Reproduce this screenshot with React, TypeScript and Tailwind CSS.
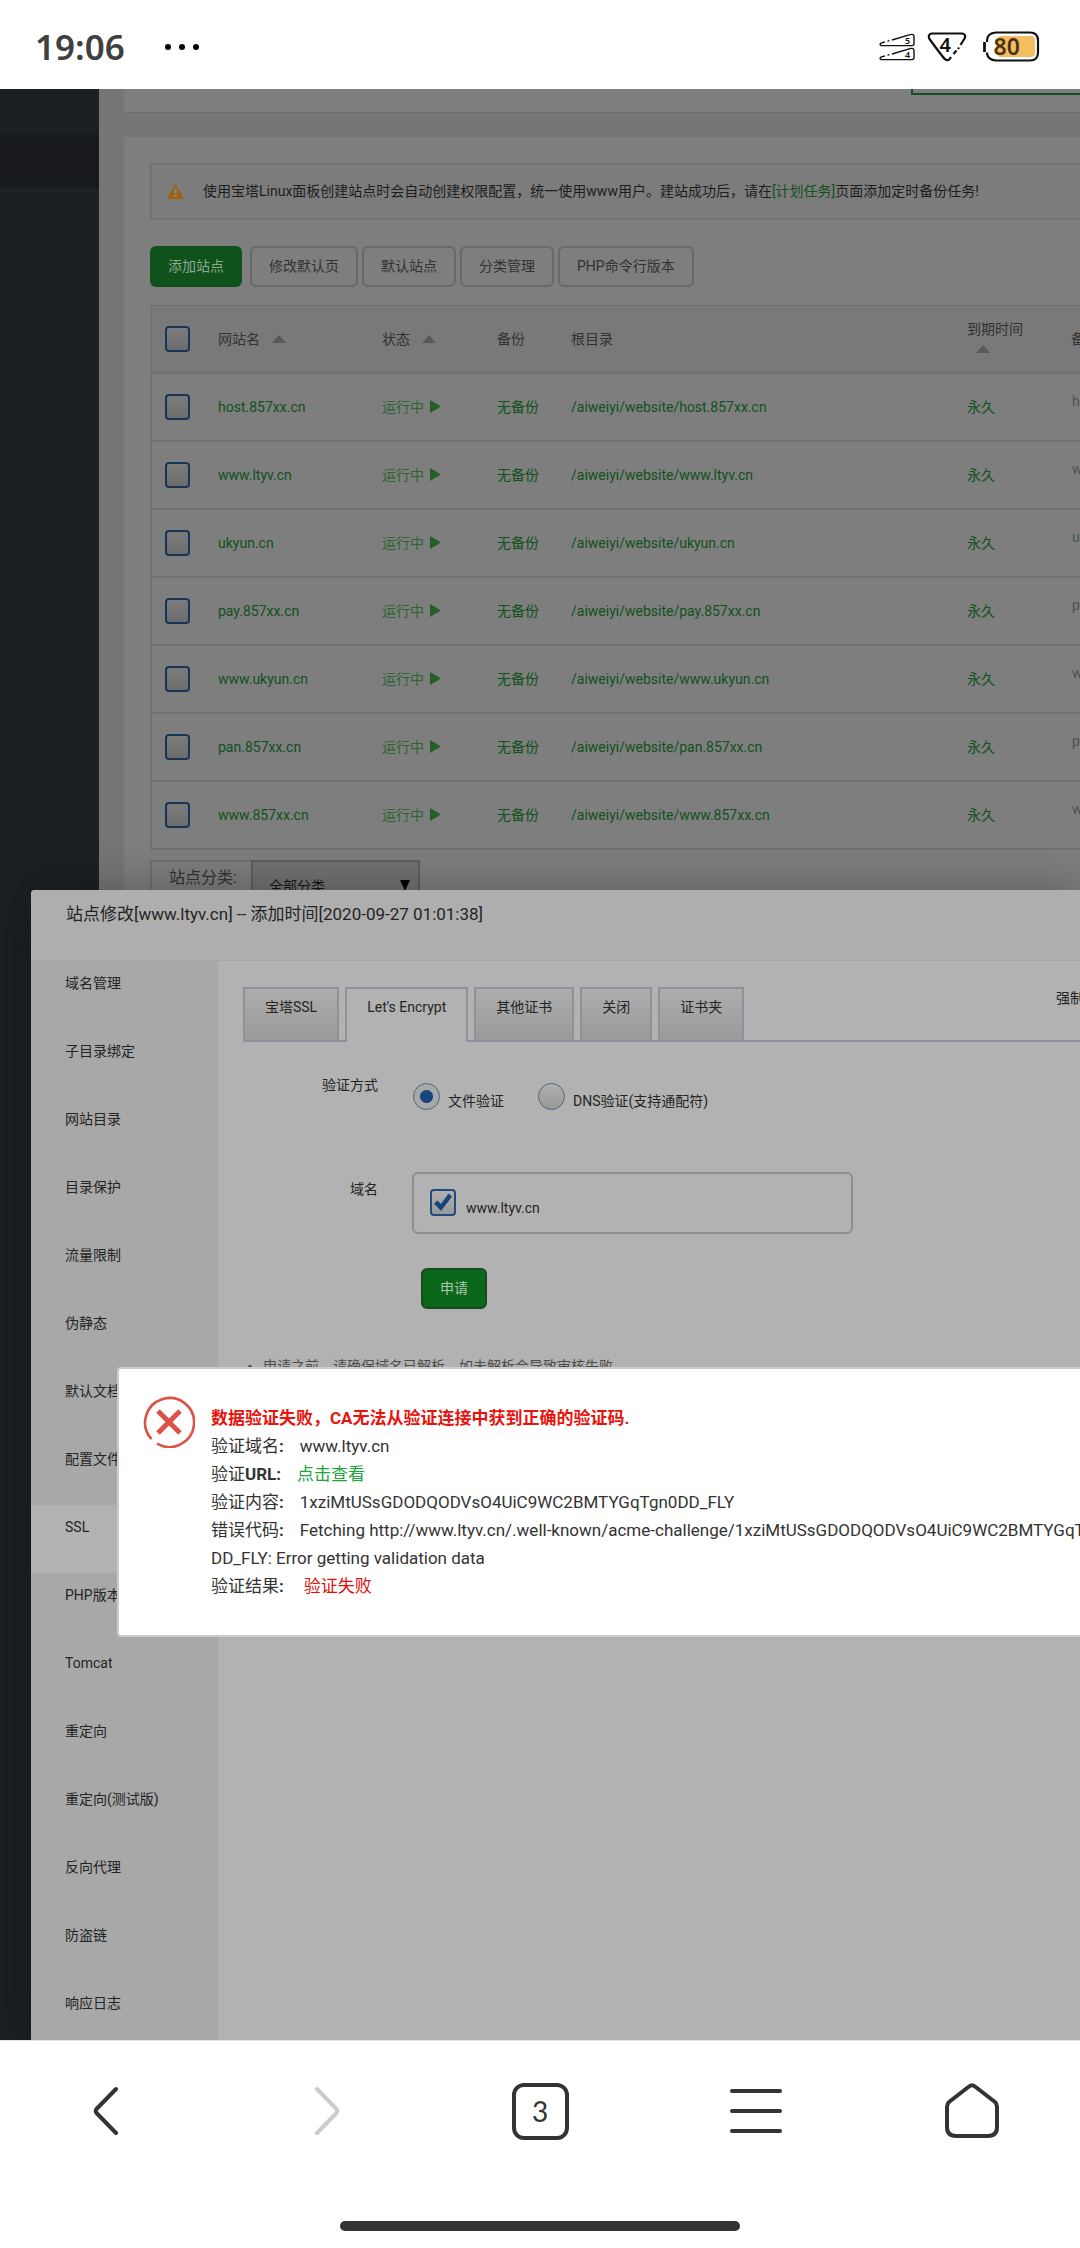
import React from "react";

type Site = { name: string; note: string };

const sites: Site[] = [
  { name: "host.857xx.cn", note: "host.857xx.cn" },
  { name: "www.ltyv.cn", note: "www.ltyv.cn" },
  { name: "ukyun.cn", note: "ukyun.cn" },
  { name: "pay.857xx.cn", note: "pay.857xx.cn" },
  { name: "www.ukyun.cn", note: "www.ukyun.cn" },
  { name: "pan.857xx.cn", note: "pan.857xx.cn" },
  { name: "www.857xx.cn", note: "www.857xx.cn" },
];

const menu = [
  "域名管理", "子目录绑定", "网站目录", "目录保护", "流量限制", "伪静态", "默认文档", "配置文件",
  "SSL", "PHP版本", "Tomcat", "重定向", "重定向(测试版)", "反向代理", "防盗链", "响应日志",
];

const sslTabs = ["宝塔SSL", "Let's Encrypt", "其他证书", "关闭", "证书夹"];

function StatusBar() {
  return (
    <header className="flex h-[89px] shrink-0 items-center bg-white pt-1 pr-10 pl-[35px]">
      <time className="font-['Noto_Sans',sans-serif] text-[35px] leading-none font-semibold text-[#404040]">19:06</time>
      <div className="ml-10 flex gap-2" aria-hidden="true">
        <i className="size-1.5 rounded-full bg-black" />
        <i className="size-1.5 rounded-full bg-black" />
        <i className="size-1.5 rounded-full bg-black" />
      </div>
      <div className="ml-auto flex items-center">
        <svg width="36" height="28" viewBox="0 0 36 28" fill="none" stroke="#111" strokeWidth="1.4">
          <path d="M1 11.5 2 10l4-1.200M8.500 8.200l2-.6M13 7 31 1.600q4-1 4 2v7q0 2-2 2H3q-2 0-2-1.500" />
          <path d="M1 25.500 2 24l4-1.200M8.500 22.200l2-.6M13 21l18-5.400q4-1 4 2v7q0 2-2 2H3q-2 0-2-1.500" />
          <text x="26" y="10.500" fontSize="9" fontFamily="Noto Sans" fontWeight="600" fill="#111" stroke="none">5</text>
          <text x="26" y="24.800" fontSize="9" fontFamily="Noto Sans" fontWeight="600" fill="#111" stroke="none">4</text>
        </svg>
        <svg className="ml-3" width="40" height="30" viewBox="0 0 40 30" fill="none" stroke="#111" strokeWidth="2.2">
          <path d="M24 25l-1.500 2.200q-2 2-4.500 0Q14.500 23.500 2.500 7q-2-4.500 2-5.500h31q4 1 2 5L33.500 13M32 15.500l-1 1.500M29.500 18.500 26.500 22" />
          <text x="12.500" y="20" fontSize="20" fontFamily="Noto Sans" fontWeight="600" fill="#111" stroke="none">4</text>
        </svg>
        <svg className="ml-4" width="57" height="31" viewBox="0 0 57 31" fill="none">
          <rect x="14" y="5" width="38" height="21" rx="4" fill="#f5bd62" />
          <path d="M4 11V10q0-8 9-8.500h34q8 0 8 8v12q0 8-8 8H13q-8-.5-9-7v-1" stroke="#111" strokeWidth="2.200" />
          <path d="M1.500 11v10" stroke="#111" strokeWidth="2.800" />
          <text x="10.500" y="24" fontSize="23" fontFamily="Noto Sans" fontWeight="600" fill="#4a3410">80</text>
        </svg>
      </div>
    </header>
  );
}

function RowCheck({ label }: { label: string }) {
  return (
    <input
      type="checkbox"
      aria-label={label}
      className="block h-[26px] w-[25px] appearance-none rounded-[4px] border-2 border-[#173558] bg-linear-to-b from-[#7c7c7c] to-[#6c6c6c]"
    />
  );
}

function SortArrow({ className }: { className?: string }) {
  return (
    <svg className={className} width="14" height="8" viewBox="0 0 14 8" aria-hidden="true">
      <path d="M7 0 14 8H0z" fill="#595959" />
    </svg>
  );
}

function SiteTable() {
  return (
    <table className="mt-[18px] w-[1250px] table-fixed border-collapse border border-[#6f6f6f] text-left">
      <colgroup>
        <col className="w-[67px]" />
        <col className="w-[164px]" />
        <col className="w-[115px]" />
        <col className="w-[74px]" />
        <col className="w-[396px]" />
        <col className="w-[104px]" />
        <col />
      </colgroup>
      <thead>
        <tr className="h-[67px] border-b-2 border-[#727272] bg-[#797979] text-[#323232]">
          <th className="pl-[13px]"><RowCheck label="全选" /></th>
          <th className="font-normal"><span className="flex items-center gap-3">网站名<SortArrow /></span></th>
          <th className="font-normal"><span className="flex items-center gap-3">状态<SortArrow /></span></th>
          <th className="font-normal">备份</th>
          <th className="font-normal">根目录</th>
          <th className="font-normal">到期时间<SortArrow className="my-1.5 ml-[9px]" /></th>
          <th className="font-normal">备注</th>
        </tr>
      </thead>
      <tbody>
        {sites.map((s) => (
          <tr key={s.name} className="h-[68px] border-2 border-[#717171] bg-[#7e7e7e] text-[#10511c]">
            <td className="pl-[13px]"><RowCheck label={s.name} /></td>
            <td><a href="#">{s.name}</a></td>
            <td>
              <a href="#" className="flex items-center gap-1.5 text-[#2e6432]">
                运行中
                <svg width="11" height="13" viewBox="0 0 11 13"><path d="M0 0 11 6.500 0 13z" fill="#255f25" /></svg>
              </a>
            </td>
            <td><a href="#">无备份</a></td>
            <td><a href="#">/aiweiyi/website/{s.name}</a></td>
            <td><a href="#">永久</a></td>
            <td className="pb-3 pl-px text-[#4f4f4f]">{s.note}</td>
          </tr>
        ))}
      </tbody>
    </table>
  );
}

function ToolButton({ children }: { children: React.ReactNode }) {
  return <button className="h-[41px] rounded-md border-2 border-[#696969] px-[17px] pb-0.5 text-[#323232]">{children}</button>;
}

function SitesPage() {
  return (
    <div className="flex h-full">
      <nav className="w-[99px] shrink-0 bg-[#1c2025] pt-[46px]" aria-label="主菜单">
        <div className="h-[52px] bg-[#18191c]" />
      </nav>
      <div className="min-w-0 flex-1 overflow-hidden bg-[#767676] pl-[25px]">
        <div className="flex h-6 w-[1300px] border-b border-[#6e6e6e] bg-[#7e7e7e] pl-[787px]">
          <div className="h-1.5 w-[300px] border-2 border-t-0 border-[#184e22]" />
        </div>
        <section className="mt-6 w-[1300px] bg-[#7e7e7e] pt-[26px] pb-20 pl-[26px]">
          <p className="flex h-[57px] items-center border-2 border-[#737373] bg-[#7c7c7c] pb-0.5 pl-[15px] text-[#1c1c1c]">
            <svg width="17" height="16" viewBox="0 0 17 16" aria-hidden="true">
              <path d="M8.500.5 17 16H0z" fill="#9a6414" />
              <path d="M8.500 5.500v5M8.500 12v2" stroke="#8a8a8a" strokeWidth="2.200" />
            </svg>
            <span className="ml-[19px] whitespace-nowrap">
              使用宝塔Linux面板创建站点时会自动创建权限配置，统一使用www用户。建站成功后，请在
              <a href="#" className="text-[#10511c]">[计划任务]</a>页面添加定时备份任务!
            </span>
          </p>
          <div className="mt-[26px] flex gap-1">
            <button className="mr-1 h-[41px] rounded-md bg-[#10521c] px-[18px] pb-0.5 text-[#8fa893]">添加站点</button>
            <ToolButton>修改默认页</ToolButton>
            <ToolButton>默认站点</ToolButton>
            <ToolButton>分类管理</ToolButton>
            <ToolButton>PHP命令行版本</ToolButton>
          </div>
          <SiteTable />
          <div className="mt-2.5 flex h-14">
            <label htmlFor="category" className="w-[101px] border-2 border-r-0 border-[#707070] pt-1 pl-[17px] text-base text-[#323232]">
              站点分类:
            </label>
            <div className="relative">
              <select id="category" className="h-full w-[169px] appearance-none border-2 border-[#5f5f5f] bg-[#727272] pb-1 pl-4 text-[#151515]">
                <option>全部分类</option>
              </select>
              <svg className="absolute top-5 right-2.5" width="10" height="11" viewBox="0 0 10 11"><path d="M0 0h10L5 11z" fill="#000" /></svg>
            </div>
          </div>
        </section>
      </div>
    </div>
  );
}

function Radio({ id, label, checked }: { id: string; label: string; checked?: boolean }) {
  return (
    <div className="flex">
      <input
        id={id}
        type="radio"
        name="verify"
        defaultChecked={checked}
        className="size-[27px] appearance-none rounded-full border border-[#4a6484] bg-linear-to-b from-[#b0b0b0] to-[#989898] checked:bg-[radial-gradient(circle,#17457c_0_6px,#a8a8a8_7px)]"
      />
      <label htmlFor={id} className="mt-2 ml-2 leading-5">{label}</label>
    </div>
  );
}

function SiteModal() {
  return (
    <section className="absolute top-[801px] right-0 bottom-0 left-[31px] flex flex-col overflow-hidden rounded-tl-sm bg-[#b2b2b2] text-[#242424] shadow-[0_0_50px_rgba(0,0,0,0.3)]">
      <h2 className="h-[71px] shrink-0 border-b border-[#a6a6a6] bg-[#aeaeae] pt-3 pl-[35px] text-[17px] leading-6">
        站点修改[www.ltyv.cn] -- 添加时间[2020-09-27 01:01:38]
      </h2>
      <div className="flex min-h-0 flex-1">
        <nav className="w-[187px] shrink-0 bg-[#a8a8a8]" aria-label="站点设置">
          {menu.map((m) => (
            <a
              key={m}
              href="#"
              className={m === "SSL" ? "block h-[68px] bg-[#b2b2b2] pt-3 pl-[34px] leading-5" : "block h-[68px] pt-3 pl-[34px] leading-5"}
            >
              {m}
            </a>
          ))}
        </nav>
        <div className="min-w-0 flex-1 pt-[26px] pl-[25px]">
          <div className="flex border-b-2 border-[#90909a]">
            <div className="flex gap-1.5" role="tablist">
              {sslTabs.map((t) => (
                <button
                  key={t}
                  role="tab"
                  aria-selected={t === "Let's Encrypt"}
                  className={
                    t === "Let's Encrypt"
                      ? "-mb-0.5 flex h-[55px] border-2 border-b-0 border-[#90909a] bg-[#b2b2b2] px-5 pt-2 leading-5"
                      : "flex h-[53px] border-2 border-b-0 border-[#90909a] bg-linear-to-b from-[#adadad] to-[#9a9a9a] px-5 pt-2 leading-5"
                  }
                >
                  {t}
                </button>
              ))}
            </div>
            <span className="-mr-20 ml-auto w-[104px] shrink-0 pt-px leading-5 whitespace-nowrap">强制HTTPS</span>
          </div>
          <form>
            <div className="mt-[33px] flex">
              <span className="w-[135px] text-right leading-5">验证方式</span>
              <div className="mt-2 ml-[35px] flex gap-[34px]">
                <Radio id="file" label="文件验证" checked />
                <Radio id="dns" label="DNS验证(支持通配符)" />
              </div>
            </div>
            <div className="mt-[61px] flex">
              <span className="w-[135px] pt-[7px] text-right leading-5">域名</span>
              <div className="ml-[34px] flex h-[62px] w-[441px] rounded-md border-2 border-[#8e8e8e] pt-[15px] pl-4">
                <span className="relative">
                  <input
                    id="domain"
                    type="checkbox"
                    defaultChecked
                    className="block h-[27px] w-[26px] appearance-none rounded-[4px] border-2 border-[#214b7c] bg-linear-to-b from-[#b0b0b0] to-[#999]"
                  />
                  <svg className="pointer-events-none absolute top-1 left-1" width="18" height="19" viewBox="0 0 18 19">
                    <path d="M0 10.500 3.500 7.500 7 11 14.500.5 18 3.500 7 18z" fill="#17457c" />
                  </svg>
                </span>
                <label htmlFor="domain" className="mt-[9px] ml-2.5 leading-5">www.ltyv.cn</label>
              </div>
            </div>
            <button type="button" className="mt-[34px] ml-[178px] h-[41px] rounded-md border-2 border-[#174b1f] bg-[#0b681b] px-[17px] pb-0.5 text-[#b2c4b4]">
              申请
            </button>
            <ul className="mt-[47px] list-disc pl-5 leading-5 text-[#4c4c4c]">
              <li>申请之前，请确保域名已解析，如未解析会导致审核失败</li>
            </ul>
          </form>
        </div>
      </div>
    </section>
  );
}

function ErrorDialog() {
  return (
    <section role="alertdialog" aria-label="验证失败" className="absolute top-[1278px] right-0 left-[117px] flex overflow-hidden rounded-l-sm border-2 border-r-0 border-[#cbcbcb] bg-white pt-[27px] pb-[33px] pl-6 text-[#333]">
      <svg width="52" height="52" viewBox="0 0 52 52" fill="none" stroke="#dd5246" className="shrink-0" aria-hidden="true">
        <path d="M8.500 43A24.500 24.500 0 1 1 14 47.500" strokeWidth="2.600" />
        <path d="M15 15 37 37M37 15 15 37" strokeWidth="5" />
      </svg>
      <div className="mt-2 ml-4 pb-0.5 text-[17px] leading-7 whitespace-nowrap">
        <p className="font-bold text-[#e8130c]">数据验证失败，CA无法从验证连接中获到正确的验证码.</p>
        <p>验证域名<b>:</b><span className="ml-4">www.ltyv.cn</span></p>
        <p>验证<b>URL:</b><a href="#" className="ml-4 text-[#20a53a]">点击查看</a></p>
        <p>验证内容<b>:</b><span className="ml-4">1xziMtUSsGDODQODVsO4UiC9WC2BMTYGqTgn0DD_FLY</span></p>
        <p>
          错误代码<b>:</b>
          <span className="ml-4">Fetching http://www.ltyv.cn/.well-known/acme-challenge/1xziMtUSsGDODQODVsO4UiC9WC2BMTYGqTgn0</span>
          <br />
          DD_FLY: Error getting validation data
        </p>
        <p>验证结果<b>:</b><span className="ml-5 text-[#e01010]">验证失败</span></p>
      </div>
    </section>
  );
}

function BrowserBar() {
  return (
    <footer className="shrink-0 border-t border-[#e2e2e2] bg-white pt-[38px] pb-[17px]">
      <nav className="grid grid-cols-5 text-[#333]" aria-label="浏览器">
        <button aria-label="后退" className="flex h-16 items-center justify-center pr-1">
          <svg width="26" height="50" viewBox="0 0 26 50" fill="none" stroke="currentColor" strokeWidth="4" strokeLinecap="round" strokeLinejoin="round"><path d="M23 3 3.500 23q-1.500 2 0 4L23 47" /></svg>
        </button>
        <button aria-label="前进" disabled className="flex h-16 items-center justify-center pl-1.5 text-[#ccc]">
          <svg width="26" height="50" viewBox="0 0 26 50" fill="none" stroke="currentColor" strokeWidth="4" strokeLinecap="round" strokeLinejoin="round"><path d="M3 3 22.500 23q1.500 2 0 4L3 47" /></svg>
        </button>
        <button aria-label="标签页" className="flex h-16 items-center justify-center">
          <span className="flex size-[57px] items-center justify-center rounded-xl border-4 border-current font-[Lato,sans-serif] text-[28px] leading-none">3</span>
        </button>
        <button aria-label="菜单" className="flex h-16 items-center justify-center">
          <svg width="52" height="44" viewBox="0 0 52 44" stroke="currentColor" strokeWidth="4" strokeLinecap="round"><path d="M2 2h48M2 22h48M2 42h48" /></svg>
        </button>
        <button aria-label="主页" className="flex h-16 items-center justify-center">
          <svg width="56" height="56" viewBox="0 0 56 56" fill="none" stroke="currentColor" strokeWidth="4" strokeLinejoin="round"><path d="M25 3.500q3-2.500 6 0L51 19q2 2 2 5v20q0 9-9 9H12q-9 0-9-9V24q0-3 2-5z" /></svg>
        </button>
      </nav>
      <div className="mx-auto mt-[78px] h-2.5 w-[400px] rounded-full bg-[#333]" />
    </footer>
  );
}

export default function App() {
  return (
    <div className="flex h-screen flex-col overflow-hidden font-[Roboto,'Noto_Sans_CJK_SC',sans-serif] text-sm">
      <StatusBar />
      <main className="relative min-h-0 flex-1 overflow-hidden">
        <SitesPage />
        <SiteModal />
        <ErrorDialog />
      </main>
      <BrowserBar />
    </div>
  );
}
